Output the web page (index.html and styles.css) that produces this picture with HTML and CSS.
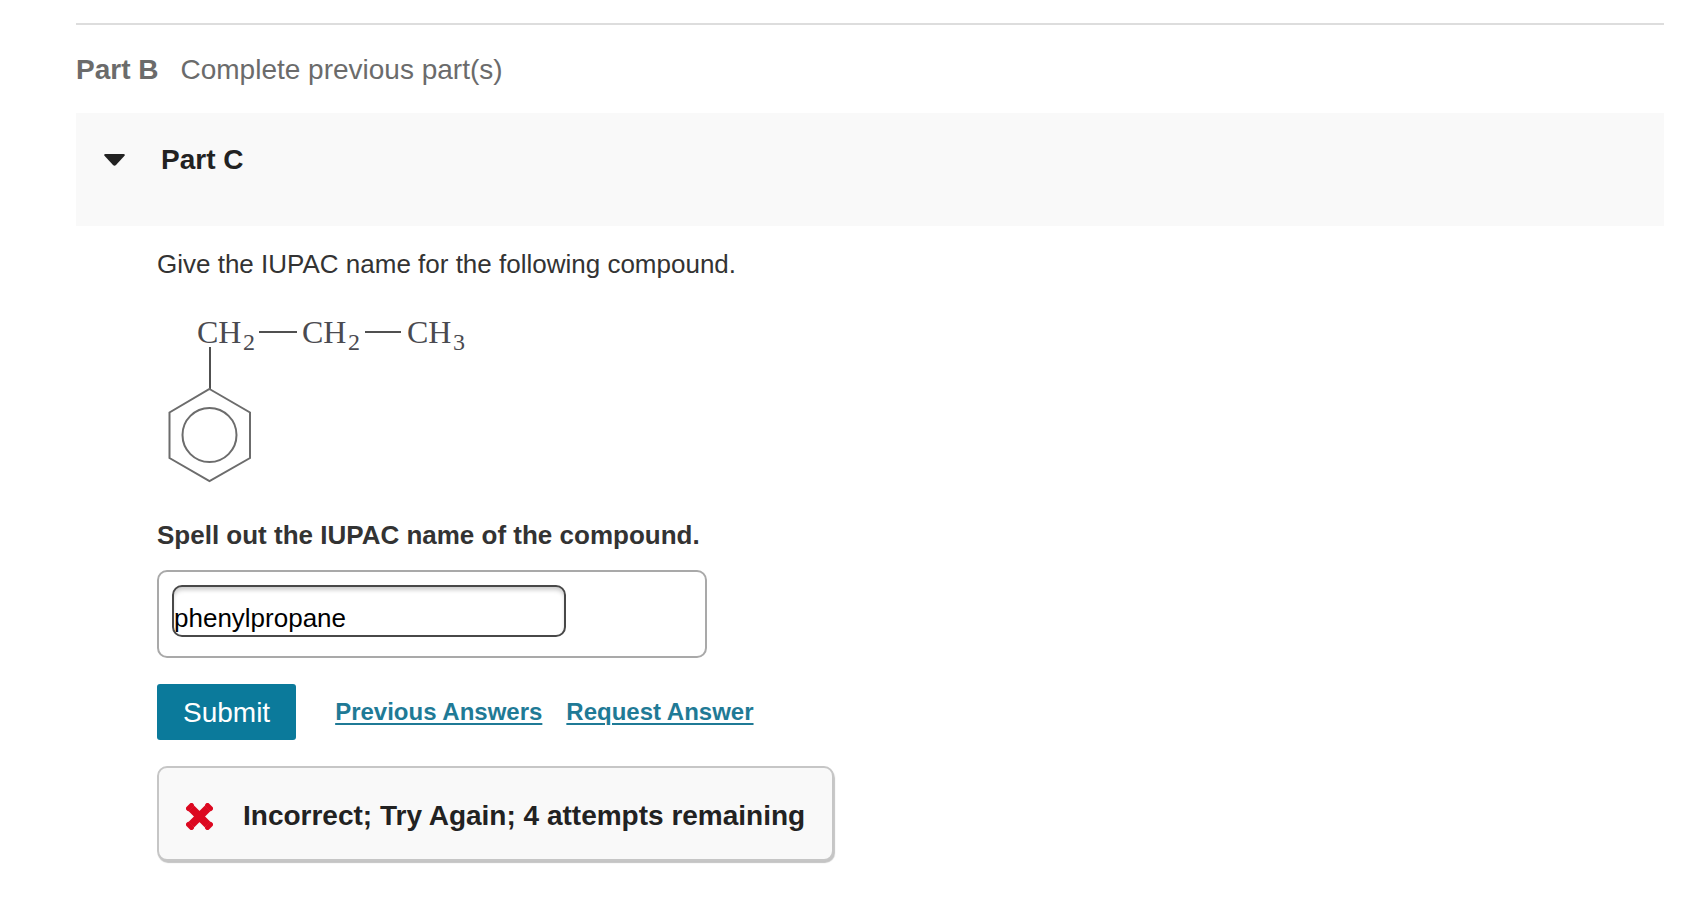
FILE: index.html
```html
<!DOCTYPE html>
<html lang="en">
<head>
<meta charset="utf-8">
<title>Part C</title>
<link rel="stylesheet" href="styles.css">
</head>
<body>
<main class="page">
  <section class="locked-part">
    <h2 class="part-title">Part B</h2>
    <p class="part-note">Complete previous part(s)</p>
  </section>
  <section class="part">
    <header class="part-header">
      <button class="toggle" type="button" aria-label="Collapse Part C" aria-expanded="true">
        <svg class="caret" viewBox="0 0 21 12" aria-hidden="true"><path d="M1.5 0h18q2 .3 1 1.800L12 11q-1.500 1.300-3 0L.5 1.800Q-.5.300 1.500 0z"/></svg>
      </button>
      <h2 class="part-title">Part C</h2>
    </header>
    <form class="part-body">
      <p class="question">Give the IUPAC name for the following compound.</p>
      <svg class="compound" viewBox="157 300 340 190" role="img" aria-label="Propyl chain attached to a benzene ring">
        <g class="atoms">
          <text x="197" y="343">CH</text><text class="sub" x="243" y="350">2</text>
          <text x="302" y="343">CH</text><text class="sub" x="348" y="350">2</text>
          <text x="407" y="343">CH</text><text class="sub" x="453" y="350">3</text>
        </g>
        <g class="bonds">
          <path d="M259 332H297M365 332H401M210 347V390"/>
          <path class="ring" d="M209.500 389L250 412.500V458L209.500 481L169.500 458V412.500Z"/>
          <circle class="ring" cx="209.500" cy="435" r="27"/>
        </g>
      </svg>
      <label class="prompt" for="answer">Spell out the IUPAC name of the compound.</label>
      <div class="answer-box">
        <input class="answer" id="answer" type="text" value="phenylpropane">
      </div>
      <div class="actions">
        <button class="submit" type="button">Submit</button>
        <a class="link" href="#previous">Previous Answers</a>
        <a class="link" href="#request">Request Answer</a>
      </div>
      <div class="feedback" role="status">
        <svg class="cross" viewBox="0 0 27 27" aria-hidden="true"><path d="M5.500 5.500L21.500 21.500M21.500 5.500L5.500 21.500"/><path class="cross-tips" d="M2.500 5.500L5.500 2.500M21.500 2.500L24.500 5.500M24.500 21.500L21.500 24.500M5.500 24.500L2.500 21.500"/></svg>
        <p class="feedback-text">Incorrect; Try Again; 4 attempts remaining</p>
      </div>
    </form>
  </section>
</main>
</body>
</html>
```
FILE: styles.css
```css
* { box-sizing: border-box; }

body {
  margin: 0;
  background: #fff;
  color: #333;
  font-family: "Liberation Sans", Arial, sans-serif;
  font-size: 26px;
  line-height: 32px;
}

h2, p { margin: 0; }

.page { padding: 23px 23px 40px 76px; }

.locked-part {
  display: flex;
  gap: 22px;
  padding: 29px 0 27px;
  border-top: 2px solid #ddd;
  color: #6b6b6b;
  font-size: 28px;
}

.part-title { font-size: 28px; font-weight: bold; }

.part-header {
  display: flex;
  align-items: center;
  gap: 36px;
  padding: 31px 28px 50px;
  background: #f9f9f9;
  color: #222;
}

.toggle {
  display: flex;
  padding: 0;
  border: 0;
  background: none;
}

.caret { width: 21px; height: 12px; fill: #222; }

.part-body {
  display: flex;
  flex-direction: column;
  align-items: flex-start;
  padding: 22px 0 0 81px;
}

.compound { width: 340px; height: 190px; margin: 20px 0 29px; }

.atoms {
  fill: #4a4a50;
  font-family: "Liberation Serif", "Times New Roman", serif;
  font-size: 32px;
}

.sub { font-size: 24px; }

.bonds { fill: none; stroke: #505050; stroke-width: 2; }

.ring { stroke: #6c6c6c; }

.prompt { font-weight: bold; }

.answer-box {
  width: 550px;
  max-width: 100%;
  margin-top: 19px;
  padding: 13px 13px 19px;
  border: 2px solid #a9a9a9;
  border-radius: 10px;
}

.answer {
  display: block;
  width: 394px;
  max-width: 100%;
  height: 52px;
  padding: 14px 0 0;
  border: 2px solid #484848;
  border-radius: 10px;
  background: #fff;
  box-shadow: inset 0 4px 4px -1px #ccc;
  color: #000;
  font: inherit;
}

.actions {
  display: flex;
  flex-wrap: wrap;
  align-items: center;
  gap: 24px;
  margin: 26px 0;
}

.submit {
  margin-right: 15px;
  padding: 13px 26px 11px;
  border: 0;
  border-radius: 3px;
  background: #0b7a9b;
  color: #fff;
  font: inherit;
  font-size: 28px;
}

.link {
  color: #1f7a96;
  font-size: 24px;
  font-weight: bold;
  text-decoration: underline;
  text-decoration-thickness: 2px;
  text-underline-offset: 3px;
}

.feedback {
  display: flex;
  align-items: center;
  gap: 30px;
  padding: 32px 27px 27px;
  border: 2px solid #c6c6c6;
  border-radius: 10px;
  background: #f9f9f9;
  box-shadow: 1px 2px 1px #c4c4c4;
  color: #222;
  font-size: 28px;
  font-weight: bold;
}

.cross {
  width: 27px;
  height: 27px;
  fill: none;
  stroke: #dc0820;
  stroke-width: 8;
}

.cross-tips { stroke-width: 5; stroke-linecap: round; }
```
